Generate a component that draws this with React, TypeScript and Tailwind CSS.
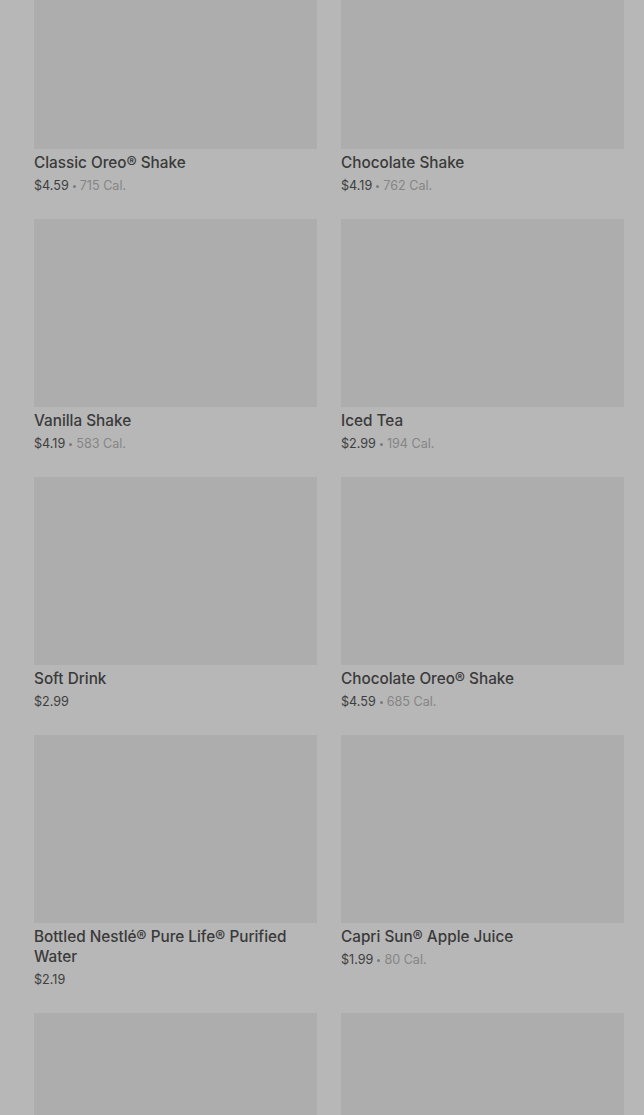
const items = [
  { name: "Classic Oreo® Shake", price: "$4.59", cal: "715 Cal." },
  { name: "Chocolate Shake", price: "$4.19", cal: "762 Cal." },
  { name: "Vanilla Shake", price: "$4.19", cal: "583 Cal." },
  { name: "Iced Tea", price: "$2.99", cal: "194 Cal." },
  { name: "Soft Drink", price: "$2.99", cal: "" },
  { name: "Chocolate Oreo® Shake", price: "$4.59", cal: "685 Cal." },
  { name: "Bottled Nestlé® Pure Life® Purified Water", price: "$2.19", cal: "" },
  { name: "Capri Sun® Apple Juice", price: "$1.99", cal: "80 Cal." },
  { name: "", price: "", cal: "" },
  { name: "", price: "", cal: "" },
];

function Card({ name, price, cal }: { name: string; price: string; cal: string }) {
  return (
    <div className="flex flex-col">
      <div className="h-[188px] w-full bg-[#adadad]" />
      {name && (
        <div className="mt-[4px] text-[15.3px] leading-5 font-medium text-[#3a3a3a]">
          {name}
        </div>
      )}
      {price && (
        <div className="mt-[3px] flex items-center text-[12.6px] leading-5 text-[#3e3e3e]">
          <span>{price}</span>
          {cal && (
            <>
              <span className="mx-[4px] h-[3px] w-[3px] rounded-full bg-[#7a7a7a]" />
              <span className="text-[#858585]">{cal}</span>
            </>
          )}
        </div>
      )}
    </div>
  );
}

export default function App() {
  return (
    <div
      className="h-[1115px] w-[644px] overflow-hidden bg-[#b7b7b7]"
      style={{ fontFamily: "Inter, 'Liberation Sans', sans-serif" }}
    >
      <div className="-mt-[39px] grid grid-cols-2 gap-x-[24px] gap-y-[23px] pl-[34px] pr-[20px]">
        {items.map((it, i) => (
          <Card key={i} {...it} />
        ))}
      </div>
    </div>
  );
}
